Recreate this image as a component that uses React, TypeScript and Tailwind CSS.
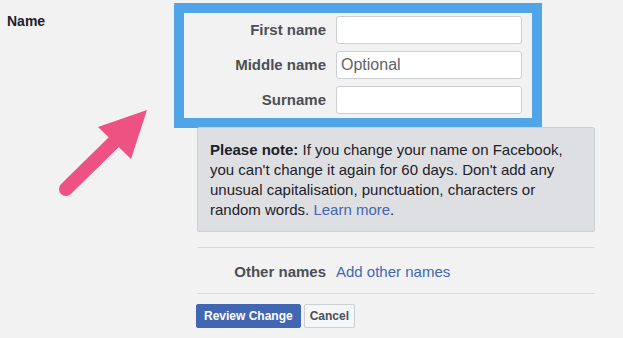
import type { FC } from 'react';

const font = { fontFamily: '"Liberation Sans", Arial, sans-serif' };

const FieldRow: FC<{ label: string; placeholder?: string }> = ({ label, placeholder }) => (
  <div className="flex items-center">
    <label className="w-[152px] pr-[10px] text-right text-[15px] font-bold text-[#4b4f56]">{label}</label>
    <input
      className="h-[28px] w-[186px] rounded-[3px] border border-[#ccd0d5] bg-white px-[4px] text-[16px] text-[#1d2129] placeholder:text-[#5f6368] outline-none"
      placeholder={placeholder}
      style={font}
    />
  </div>
);

const Arrow: FC = () => (
  <svg className="absolute left-0 top-0" width="200" height="220" viewBox="0 0 200 220">
    <line x1="66" y1="189" x2="117" y2="139" stroke="#ee5282" strokeWidth="14" strokeLinecap="round" />
    <polygon points="98,127 147,110 131,159" fill="#ee5282" />
  </svg>
);

export default function App() {
  return (
    <div className="relative flex h-[338px] w-[623px] overflow-hidden bg-[#f2f2f2] text-[#1d2129]" style={font}>
      <Arrow />
      <div className="relative w-[174px] pl-[7px] pt-[11px] text-[14px] font-bold text-[#1d2129]">Name</div>

      <div className="relative flex flex-col pt-[3px]">
        <div className="flex w-[368px] flex-col gap-[7px] border-[10px] border-[#4fa5e8] bg-[#f2f2f2] pb-[4px] pt-[3px]">
          <FieldRow label="First name" />
          <FieldRow label="Middle name" placeholder="Optional" />
          <FieldRow label="Surname" />
        </div>

        <div className="ml-[23px] w-[398px]">
          <p className="-mt-[1px] h-[105px] rounded-[2px] border border-[#ccd0d5] bg-[#dddfe3] px-[12px] pt-[12px] text-[15px] leading-[20px] text-[#1d2129]">
            <b>Please note:</b> If you change your name on Facebook, you can't change it again for 60 days. Don't add
            any unusual capitalisation, punctuation, characters or random words. <a className="text-[#4267b2]">Learn more</a>.
          </p>

          <div className="mt-[15px] flex h-[47px] items-center border-y border-[#d7d9dc] pt-[4px]">
            <span className="w-[129px] text-right text-[15px] font-bold text-[#4b4f56]">Other names</span>
            <a className="ml-[10px] text-[15px] text-[#4267b2]">Add other names</a>
          </div>

          <div className="mt-[10px] -ml-[1px] flex gap-[3px]">
            <button className="h-[24px] rounded-[2px] border border-[#4267b2] bg-[#4267b2] px-[7px] text-[12px] font-bold text-white">
              Review Change
            </button>
            <button className="h-[24px] rounded-[2px] border border-[#ccd0d5] bg-[#f5f6f7] px-[5px] text-[12px] font-bold text-[#4b4f56]">
              Cancel
            </button>
          </div>
        </div>
      </div>
    </div>
  );
}
